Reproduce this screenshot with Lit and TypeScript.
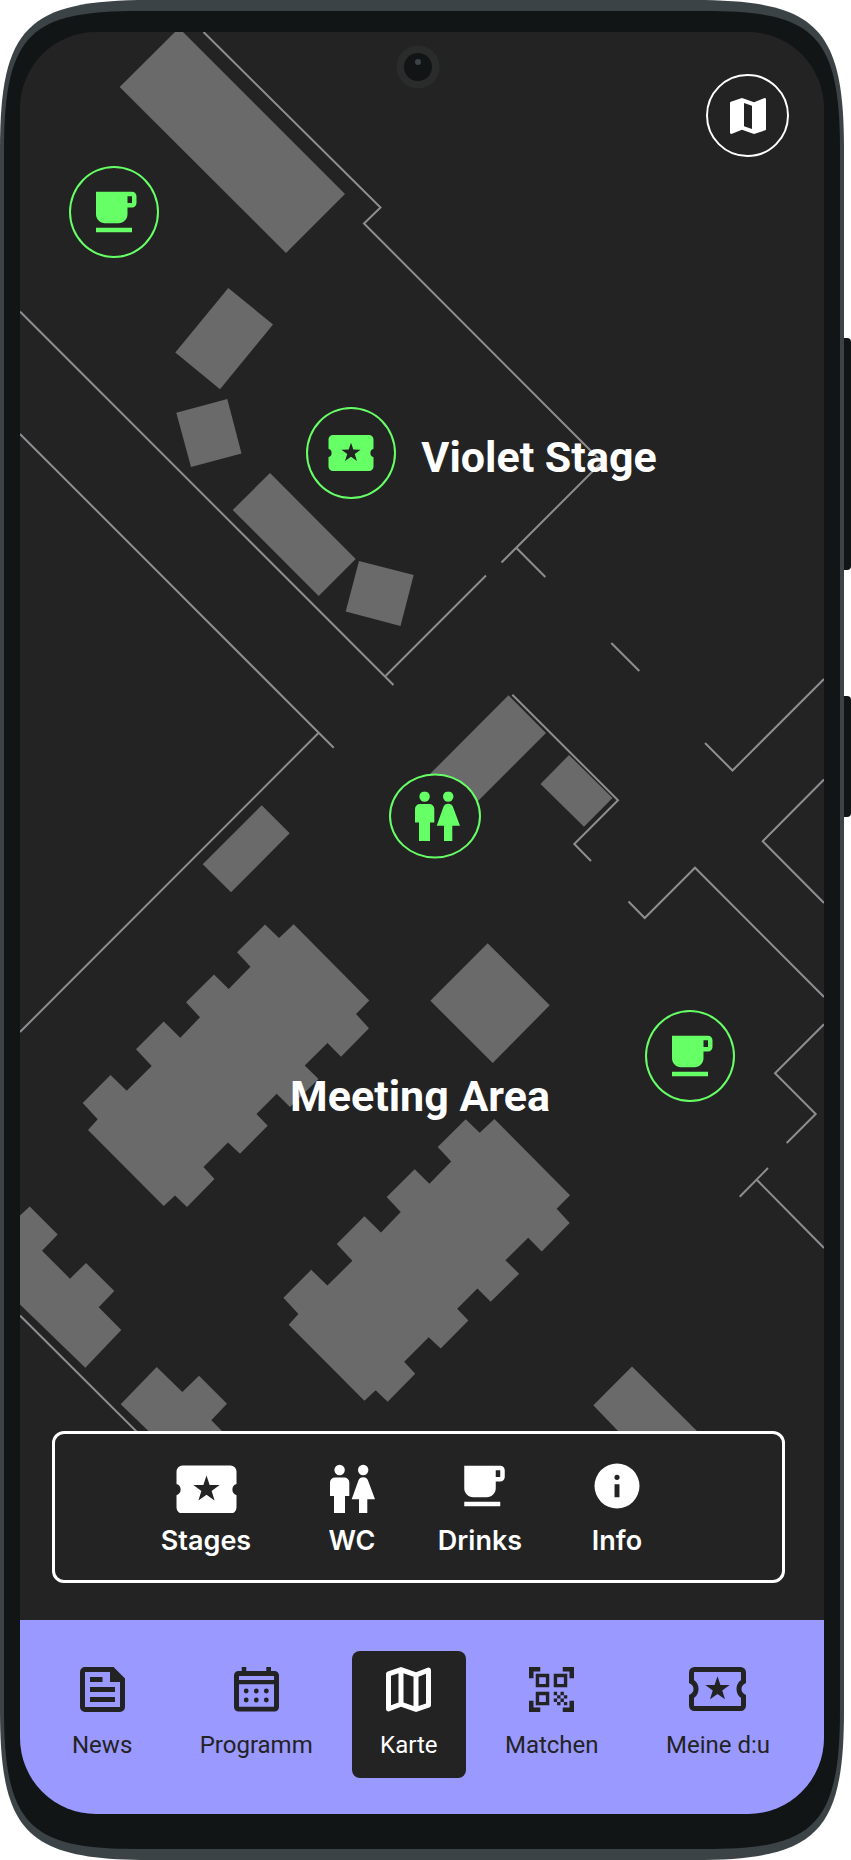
import { LitElement, html, css, svg, type TemplateResult } from "lit";
import { customElement, state } from "lit/decorators.js";
import { classMap } from "lit/directives/class-map.js";
import { styleMap } from "lit/directives/style-map.js";

const STAR = (cx: number, cy: number, r: number) =>
  Array.from({ length: 10 }, (_, i) => {
    const radius = i % 2 ? r * 0.39 : r;
    const a = ((i * 36 - 90) * Math.PI) / 180;
    return `${(cx + radius * Math.cos(a)).toFixed(2)},${(cy + radius * Math.sin(a)).toFixed(2)}`;
  });

const STAR_HOLE = (cx: number, cy: number, r: number) => `M${STAR(cx, cy, r).join("L")}Z`;

const TICKET_BODY =
  "M4 4h16a2 2 0 0 1 2 2v4.1a2 2 0 0 0 0 3.8V18a2 2 0 0 1-2 2H4a2 2 0 0 1-2-2v-4.1a2 2 0 0 0 0-3.8V6a2 2 0 0 1 2-2Z";

const cup = svg`<path d="M20 3H4v10c0 2.21 1.79 4 4 4h6c2.21 0 4-1.79 4-4v-3h2c1.11 0 2-.9 2-2V5c0-1.11-.89-2-2-2zm0 5h-2V5h2v3zM4 19h16v2H4z" />`;

const people = svg`
  <circle cx="9.6" cy="5" r="5.2" />
  <path d="M4 49.5V31H0V17.5a5 5 0 0 1 5-5h9.3a5 5 0 0 1 5 5V31H15v18.5z" />
  <circle cx="33.2" cy="5" r="5.2" />
  <path d="M29 49.5V34.3h-7.3l6.8-19Q29.6 12.3 33.2 12.3T37.9 15.3L45 34.3h-7.7v15.2z" />`;

interface Marker {
  name: string;
  kind: "drinks" | "stage" | "wc";
  x: number;
  y: number;
}

const MAP = { x: 20, y: 32, width: 804, height: 1399 };

const MARKERS: Marker[] = [
  { name: "Drinks", kind: "drinks", x: 114, y: 212 },
  { name: "Violet Stage", kind: "stage", x: 351, y: 453 },
  { name: "WC", kind: "wc", x: 435, y: 816 },
  { name: "Drinks", kind: "drinks", x: 690, y: 1056 },
];

const LABELS = [
  { text: "Violet Stage", x: 539, y: 457 },
  { text: "Meeting Area", x: 420, y: 1096 },
];

const HALL =
  "265,924.5 279,938 293.7,924.3 369.3,1000.5 356,1014 369,1028.3 341,1056.7 327.5,1043 304.7,1065.5 318.5,1079 290,1107 276.7,1093.7 256.5,1114 267.7,1125.7 240,1153.7 228,1142.5 203.5,1167 214.5,1179 187,1207 175,1195.5 163.7,1206 88,1130 97.7,1119.3 82.7,1103 110.5,1075 126.7,1090.7 151.7,1066 136,1049.3 163.7,1021.5 180.3,1037.7 200,1017.3 186,1002.3 214,974.5 228.7,989 250.5,966.7 237,952.3";

const BUILDINGS = [
  "119.7,87 179,28 345,194 286,253",
  "228.3,288 273,324.5 220,389.3 175.3,352.5",
  "176.3,412.7 227.3,399 241.5,453.5 191,467",
  "270,473 355.7,559 318.7,596 232.7,510",
  "359,561 413.7,575 400.5,626 345.7,611.5",
  "508.5,695.3 546,733 457,822 420,784",
  "569,755 612.5,798 584,826.7 540.5,784",
  "487.7,943.3 549.7,1005.3 492.7,1063 430.3,1000.7",
  "261.7,805.3 289.7,833.3 231,892.3 202.7,864.3",
  HALL,
  "20,1215.5 29.7,1206.5 57.7,1234.5 42,1250.7 70,1278.7 86,1263 114.3,1291 98.7,1307.3 121.3,1330 85.3,1367.7 20,1304.5",
  "156.7,1367 182.3,1392 199,1375.7 227,1403.7 211.3,1420.3 223,1432 149.5,1432 120.7,1404.3",
  "632,1366.5 698,1432 619,1432 593.3,1405.3",
];

const WALLS = [
  "203.5,32 380.5,207.5 364,223.5 602,462 501.5,562.5",
  "516.5,548 545.3,577",
  "385.5,676 486,575.5",
  "20,311.5 393.5,685",
  "20,434 333.7,747.7",
  "318.5,733 20,1032",
  "611.3,643 639.3,671",
  "512.3,694.7 618,800.3 574.3,844 591,861",
  "705,743 732.5,770.5 824,679",
  "824,779.5 762.7,841.3 824,903",
  "628.5,901.5 644.7,918 695,867.7 824,997",
  "824,1024.3 775,1073.3 815.7,1114 786.7,1143",
  "739.7,1196.7 768,1168",
  "757,1180 824,1248",
  "20,1315.5 137,1432",
];

const FRAME =
  "M0 150C0 27 27 0 150 0H694C817 0 844 27 844 150V1710C844 1833 817 1860 694 1860H150C27 1860 0 1833 0 1710Z";
const BEZEL =
  "M4 150C4 31 33 11 140 11H704C811 11 840 31 840 150V1710C840 1829 811 1849 704 1849H140C33 1849 4 1829 4 1710Z";

interface Entry {
  label: string;
  viewBox: string;
  width: number;
  art: TemplateResult;
}

const FILTERS: Entry[] = [
  {
    label: "Stages",
    viewBox: "2 1.8 20 18",
    width: 61,
    art: svg`<path fill-rule="evenodd" d="${TICKET_BODY}${STAR_HOLE(12, 11.9, 4.6)}" />`,
  },
  { label: "WC", viewBox: "0 -6 45 54", width: 45, art: people },
  { label: "Drinks", viewBox: "1 0 24 24", width: 54, art: cup },
  {
    label: "Info",
    viewBox: "0 0 24 24",
    width: 54,
    art: svg`<path fill-rule="evenodd" d="M12 2a10 10 0 1 0 0 20 10 10 0 0 0 0-20Zm-1.1 9.2h2.2V17h-2.2ZM12 7a1.15 1.15 0 1 1 0 2.3A1.15 1.15 0 0 1 12 7Z" />`,
  },
];
FILTERS[2].viewBox = "-1 0 24 24";

const TABS: Entry[] = [
  {
    label: "News",
    viewBox: "3 3 18 18",
    width: 45,
    art: svg`<path d="M5 21q-.825 0-1.412-.587T3 19V5q0-.825.588-1.412T5 3h11.4l4.6 4.6V19q0 .825-.587 1.413T19 21H5Zm0-2h14V9h-4V5H5v14Zm2-2h10v-2H7v2Zm0-8h5V7H7v2Zm0 4h10v-2H7v2Z" />`,
  },
  {
    label: "Programm",
    viewBox: "0 0 45 45",
    width: 45,
    art: svg`
      <path fill-rule="evenodd" d="M7.7 0h4.6v4h20V0H37v4h3.5A4.5 4.5 0 0 1 45 8.5V40a4.5 4.5 0 0 1-4.5 4.5h-36A4.5 4.5 0 0 1 0 40V8.5A4.5 4.5 0 0 1 4.5 4h3.2ZM5 9v4h35V9ZM5 17.2v22.6h35V17.2Z" />
      ${[12.2, 22.3, 32.3].map((x) => [24, 33].map((y) => svg`<circle cx=${x} cy=${y} r="2.4" />`))}`,
  },
  {
    label: "Karte",
    viewBox: "3 3 18 18",
    width: 45,
    art: svg`<path fill-rule="evenodd" d="M15 21 9 18.9l-4.65 1.8q-.5.2-.925-.112T3 19.75v-14q0-.325.188-.575T3.7 4.8L9 3l6 2.1 4.65-1.8q.5-.2.925.113T21 4.25v14q0 .325-.188.575t-.512.375L15 21Zm-1-2.45V6.85l-4-1.4v11.7l4 1.4Zm2 0 3-1V5.7l-3 1.15v11.7ZM5 18.3l3-1.15V5.45l-3 1v11.85Z" />`,
  },
  {
    label: "Matchen",
    viewBox: "2 2 20 20",
    width: 45,
    art: svg`<path d="M9.5 6.5v3h-3v-3h3M11 5H5v6h6V5zm-1.5 9.5v3h-3v-3h3M11 13H5v6h6v-6zm6.5-6.5v3h-3v-3h3M19 5h-6v6h6V5zm-6 8h1.5v1.5H13V13zm1.5 1.5H16V16h-1.5v-1.5zM16 13h1.5v1.5H16V13zm-3 3h1.5v1.5H13V16zm1.5 1.5H16V19h-1.5v-1.5zM16 16h1.5v1.5H16V16zm1.5-1.5H19V16h-1.5v-1.5zm0 3H19V19h-1.5v-1.5zM22 7h-2V4h-3V2h5v5zm0 15v-5h-2v3h-3v2h5zM2 22h5v-2H4v-3H2v5zM2 2v5h2V4h3V2H2z" />`,
  },
  {
    label: "Meine d:u",
    viewBox: "0 0 57 45",
    width: 57,
    art: svg`
      <path fill="none" stroke="currentColor" stroke-width="5" d="M2.5 14.5v-9a3 3 0 0 1 3-3h46a3 3 0 0 1 3 3v9a8.5 8.5 0 0 0 0 15v9a3 3 0 0 1-3 3h-46a3 3 0 0 1-3-3v-9a8.5 8.5 0 0 0 0-15Z" />
      <polygon points=${STAR(28.5, 22, 12.8).join(" ")} />`,
  },
];

@customElement("venue-map")
export class VenueMap extends LitElement {
  static styles = css`
    :host {
      display: block;
      position: relative;
    }
    .plan {
      display: block;
      width: 100%;
    }
    .building {
      fill: #6a6a6a;
    }
    .wall {
      fill: none;
      stroke: #8e8e90;
      stroke-width: 2;
    }
    .marker,
    .label {
      position: absolute;
      transform: translate(-50%, -50%);
    }
    .marker {
      box-sizing: border-box;
      display: grid;
      place-items: center;
      width: 90px;
      height: 92px;
      padding: 0;
      border: 2px solid #66ff66;
      border-radius: 50%;
      background: #232323;
      color: #66ff66;
      cursor: pointer;
    }
    .marker.wc {
      width: 92px;
      height: 85px;
      padding-left: 4px;
    }
    .icon {
      display: block;
      fill: currentColor;
    }
    .label {
      margin: 0;
      color: #fff;
      font: 700 43px/50px Roboto, "Liberation Sans", sans-serif;
      white-space: nowrap;
    }
  `;

  private place(x: number, y: number) {
    return styleMap({
      left: `${((x - MAP.x) / MAP.width) * 100}%`,
      top: `${((y - MAP.y) / MAP.height) * 100}%`,
    });
  }

  private icon(kind: Marker["kind"]) {
    if (kind === "wc") {
      return html`<svg class="icon" width="45" height="50" viewBox="0 0 45 50" aria-hidden="true">${people}</svg>`;
    }
    const art =
      kind === "drinks"
        ? cup
        : svg`<path fill-rule="evenodd" d="${TICKET_BODY}${STAR_HOLE(12, 11.9, 4.5)}" />`;
    return html`<svg class="icon" width="54" height="54" viewBox="0 0 24 24" aria-hidden="true">${art}</svg>`;
  }

  render() {
    return html`
      <svg class="plan" viewBox="${MAP.x} ${MAP.y} ${MAP.width} ${MAP.height}" role="img" aria-label="Karte">
        ${BUILDINGS.map((p) => svg`<polygon class="building" points=${p} />`)}
        <g transform="translate(200.7 194.8)">
          <polygon class="building" points=${HALL} />
        </g>
        ${WALLS.map((p) => svg`<polyline class="wall" points=${p} />`)}
      </svg>
      ${MARKERS.map(
        (m) => html`
          <button
            class=${classMap({ marker: true, wc: m.kind === "wc" })}
            type="button"
            aria-label=${m.name}
            style=${this.place(m.x, m.y)}
          >
            ${this.icon(m.kind)}
          </button>
        `,
      )}
      ${LABELS.map((l) => html`<h2 class="label" style=${this.place(l.x, l.y)}>${l.text}</h2>`)}
    `;
  }
}

@customElement("map-filters")
export class MapFilters extends LitElement {
  static styles = css`
    :host {
      display: block;
    }
    .card {
      box-sizing: border-box;
      display: grid;
      grid-template-columns: 146fr 146fr 110fr 164fr;
      padding: 25px 83px 23px 78px;
      border: 3px solid #fff;
      border-radius: 12px;
    }
    .filter {
      display: flex;
      flex-direction: column;
      align-items: center;
      gap: 12px;
      min-width: 0;
      padding: 0;
      border: 0;
      background: none;
      color: #fff;
      font: 600 27px/32px Inter, "Liberation Sans", sans-serif;
      cursor: pointer;
    }
    .icon {
      display: block;
      fill: currentColor;
    }
  `;

  render() {
    return html`
      <div class="card" role="group" aria-label="Filter">
        ${FILTERS.map(
          (f) => html`
            <button class="filter" type="button">
              <svg class="icon" width=${f.width} height="54" viewBox=${f.viewBox} aria-hidden="true">${f.art}</svg>
              <span>${f.label}</span>
            </button>
          `,
        )}
      </div>
    `;
  }
}

@customElement("tab-bar")
export class TabBar extends LitElement {
  static styles = css`
    :host {
      display: block;
    }
    .bar {
      display: flex;
      justify-content: space-between;
      padding: 31px 26px 36px 24px;
      background: #9999ff;
    }
    .tab {
      display: flex;
      flex-direction: column;
      align-items: center;
      gap: 19px;
      padding: 16px 28px 19px;
      border-radius: 8px;
      color: #232323;
      font: 400 24px/28px Roboto, "Liberation Sans", sans-serif;
      text-decoration: none;
      white-space: nowrap;
    }
    .tab.active {
      background: #232323;
      color: #fff;
    }
    .icon {
      display: block;
      fill: currentColor;
    }
  `;

  @state() private active = "Karte";

  private select(event: Event, label: string) {
    event.preventDefault();
    this.active = label;
  }

  render() {
    return html`
      <nav class="bar">
        ${TABS.map(
          (t) => html`
            <a
              class=${classMap({ tab: true, active: t.label === this.active })}
              href="#"
              aria-current=${t.label === this.active ? "page" : "false"}
              @click=${(e: Event) => this.select(e, t.label)}
            >
              <svg class="icon" width=${t.width} height="45" viewBox=${t.viewBox} aria-hidden="true">${t.art}</svg>
              <span>${t.label}</span>
            </a>
          `,
        )}
      </nav>
    `;
  }
}

@customElement("app-root")
export class AppRoot extends LitElement {
  static styles = css`
    :host {
      display: block;
      background: #fff;
    }
    .phone {
      position: relative;
      padding: 32px 27px 46px 20px;
    }
    .shell {
      position: absolute;
      inset: 0;
      width: 100%;
      height: 100%;
    }
    .screen {
      position: relative;
      overflow: hidden;
      border-radius: 76px;
      background: #232323;
    }
    .camera {
      position: absolute;
      top: 13px;
      left: 49.5%;
      transform: translateX(-50%);
    }
    .overview {
      position: absolute;
      top: 42px;
      right: 35px;
      box-sizing: border-box;
      display: grid;
      place-items: center;
      width: 83px;
      height: 83px;
      padding: 0;
      border: 2px solid #fff;
      border-radius: 50%;
      background: none;
      color: #fff;
      cursor: pointer;
    }
    .icon {
      display: block;
      fill: currentColor;
    }
    .filters {
      margin: 0 39px 37px 32px;
    }
  `;

  render() {
    return html`
      <div class="phone">
        <svg class="shell" viewBox="0 0 851 1860" preserveAspectRatio="none" aria-hidden="true">
          <rect x="836" y="338" width="15" height="232" rx="4" fill="#111515" />
          <rect x="836" y="696" width="15" height="121" rx="4" fill="#111515" />
          <path d=${FRAME} fill="#3c4346" />
          <path d=${BEZEL} fill="#111515" />
        </svg>
        <main class="screen">
          <venue-map></venue-map>
          <map-filters class="filters"></map-filters>
          <tab-bar></tab-bar>
          <svg class="camera" width="44" height="44" viewBox="0 0 44 44" aria-hidden="true">
            <circle cx="22" cy="22" r="21.5" fill="#2a2c2b" />
            <circle cx="22" cy="22" r="14" fill="#111515" />
            <circle cx="22" cy="17" r="3" fill="#3c4346" />
          </svg>
          <button class="overview" type="button" aria-label="Übersicht">
            <svg class="icon" width="48" height="48" viewBox="0 0 24 24" aria-hidden="true">
              <path
                fill-rule="evenodd"
                d="M15 21 9 18.9l-5.3 2.05q-.7.05-.7-.7V5.3q0-.3.4-.45L9 3l6 2.1 5.3-2.05q.7-.05.7.7V18.7q0 .3-.4.45L15 21Zm-1-2.45V6.85l-4-1.4v11.7l4 1.4Z"
              />
            </svg>
          </button>
        </main>
      </div>
    `;
  }
}
